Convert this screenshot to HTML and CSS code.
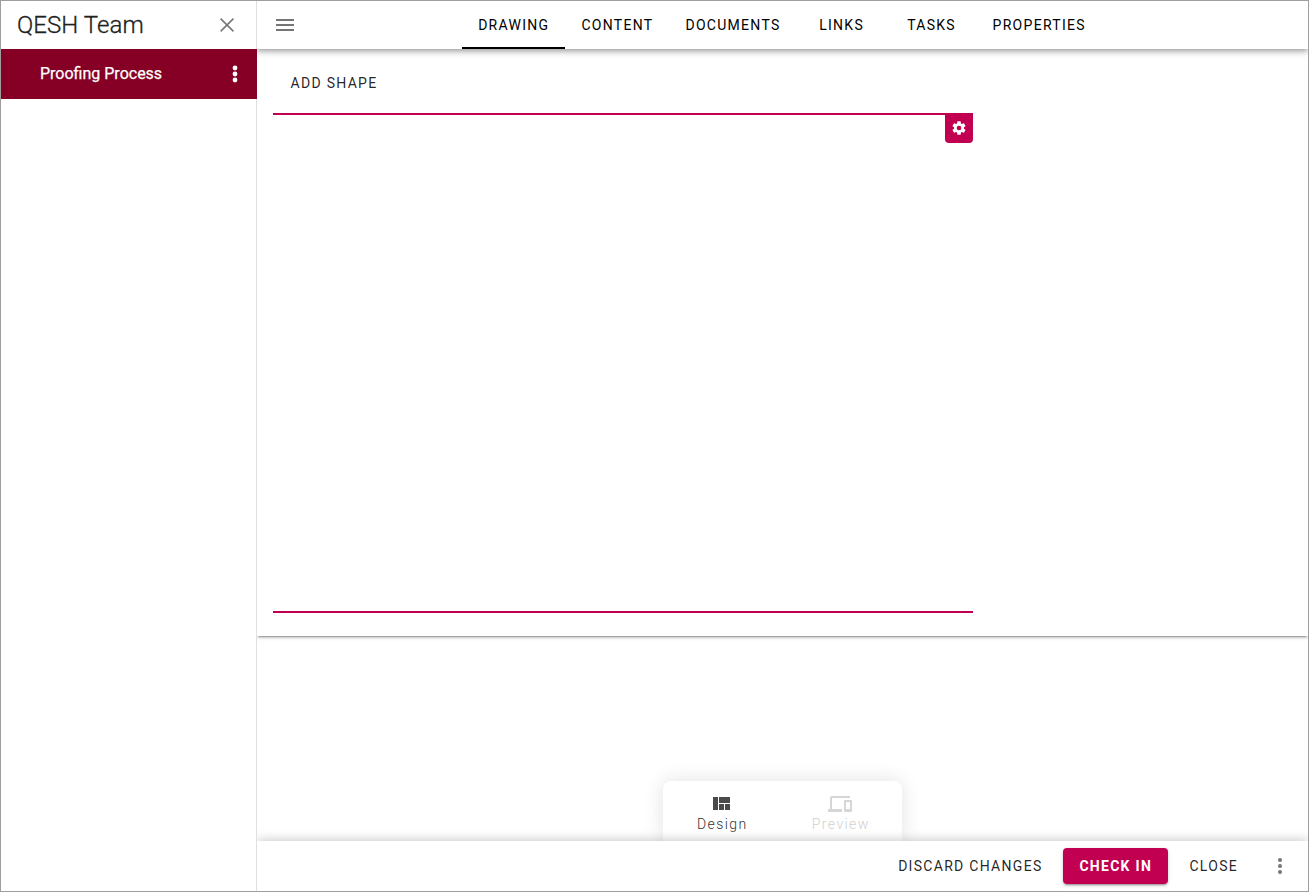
FILE: index.html
```html
<!DOCTYPE html>
<html lang="en">
<head>
<meta charset="utf-8">
<title>QESH Team</title>
<link rel="stylesheet" href="styles.css">
</head>
<body>
<div class="app">
  <aside class="sidebar">
    <div class="sidebar-head">
      <h1 class="title">QESH Team</h1>
      <svg class="icon-close" viewBox="0 0 14 14" width="14" height="14"><path d="M.6.6l12.8 12.8M13.4.6L.6 13.4" stroke="#757575" stroke-width="1.5"/></svg>
    </div>
    <div class="nav-item">
      <span class="nav-label">Proofing Process</span>
      <svg class="dots" viewBox="0 0 6 18" width="6" height="18" fill="#fff"><circle cx="3" cy="3" r="2.4"/><circle cx="3" cy="9" r="2.4"/><circle cx="3" cy="15" r="2.4"/></svg>
    </div>
  </aside>
  <main class="main">
    <header class="topbar">
      <svg class="menu" viewBox="0 0 18 12" width="18" height="12"><path d="M0 1h18M0 6h18M0 11h18" stroke="#757575" stroke-width="2"/></svg>
      <nav class="tabs">
        <a class="tab active">DRAWING</a>
        <a class="tab">CONTENT</a>
        <a class="tab">DOCUMENTS</a>
        <a class="tab">LINKS</a>
        <a class="tab">TASKS</a>
        <a class="tab">PROPERTIES</a>
      </nav>
    </header>
    <section class="panel">
      <button class="text-btn add">ADD SHAPE</button>
      <div class="canvas">
        <button class="gear"><svg viewBox="0 0 24 24" width="16" height="16" fill="#fff"><path d="M12 15.5A3.5 3.5 0 0 1 8.5 12 3.5 3.5 0 0 1 12 8.5a3.5 3.5 0 0 1 3.5 3.5 3.5 3.5 0 0 1-3.5 3.5m7.43-2.53c.04-.32.07-.64.07-.97s-.03-.66-.07-1l2.11-1.63c.19-.15.24-.42.12-.64l-2-3.46c-.12-.22-.39-.31-.61-.22l-2.49 1c-.52-.39-1.06-.73-1.69-.98l-.37-2.65A.506.506 0 0 0 14 2h-4c-.25 0-.46.18-.5.42l-.37 2.65c-.63.25-1.17.59-1.69.98l-2.49-1c-.22-.09-.49 0-.61.22l-2 3.46c-.13.22-.07.49.12.64L4.57 11c-.04.34-.07.67-.07 1s.03.65.07.97l-2.11 1.66c-.19.15-.25.42-.12.64l2 3.46c.12.22.39.3.61.22l2.49-1.01c.52.4 1.06.74 1.69.99l.37 2.65c.04.24.25.42.5.42h4c.25 0 .46-.18.5-.42l.37-2.65c.63-.26 1.17-.59 1.69-.99l2.49 1.01c.22.08.49 0 .61-.22l2-3.46c.12-.22.07-.49-.12-.64z"/></svg></button>
      </div>
    </section>
    <section class="workspace">
      <div class="modes">
        <div class="mode">
          <svg viewBox="0 0 17 13" width="17" height="13" fill="#4a4a4a"><path d="M0 0h5v13H0zM6 0h11v6H6zM6 7h5v6H6zM12 7h5v6h-5z"/></svg>
          <span>Design</span>
        </div>
        <div class="mode disabled">
          <svg viewBox="0 4 24 16" width="24" height="16" fill="#d6d6d6"><path d="M4 6h18V4H4c-1.100 0-2 .9-2 2v11H0v3h14v-3H4V6zm19 2h-6c-.55 0-1 .45-1 1v10c0 .55.45 1 1 1h6c.55 0 1-.45 1-1V9c0-.55-.45-1-1-1zm-1 9h-4v-7h4v7z"/></svg>
          <span>Preview</span>
        </div>
      </div>
    </section>
    <footer class="footer">
      <button class="text-btn">DISCARD CHANGES</button>
      <button class="text-btn primary">CHECK IN</button>
      <button class="text-btn">CLOSE</button>
      <svg class="dots more" viewBox="0 0 6 18" width="6" height="18" fill="#757575"><circle cx="3" cy="3" r="2"/><circle cx="3" cy="9" r="2"/><circle cx="3" cy="15" r="2"/></svg>
    </footer>
  </main>
</div>
</body>
</html>
```

FILE: styles.css
```css
* { box-sizing: border-box; }
body { margin: 0; font-family: Roboto, "Liberation Sans", sans-serif; color: rgba(0,0,0,.87); }
svg { display: block; flex: none; }
button { font: inherit; color: inherit; border: 0; background: none; padding: 0; }
.app { display: flex; width: 1309px; height: 892px; border: 1px solid #9e9e9e; background: #fff; overflow: hidden; }
.sidebar { width: 256px; flex: none; box-shadow: inset -1px 0 #e0e0e0; }
.sidebar-head { height: 48px; display: flex; align-items: center; justify-content: space-between; padding: 0 23px 0 16px; }
.title { margin: 0; font-size: 24px; line-height: 32px; font-weight: 300; letter-spacing: .06px; color: #212121; -webkit-text-stroke: .3px #212121; }
.nav-item { height: 50px; background: #850024; color: #fff; display: flex; align-items: center; justify-content: space-between; padding: 0 19px 0 39px; }
.nav-label { font-size: 16px; line-height: 24px; -webkit-text-stroke: .25px #fff; }
.main { flex: 1; min-width: 0; display: flex; flex-direction: column; overflow: hidden; }
.topbar { height: 48px; flex: none; display: flex; align-items: center; background: #fff; z-index: 2; box-shadow: 0 2px 4px -1px rgba(0,0,0,.2), 0 4px 5px rgba(0,0,0,.14), 0 1px 10px rgba(0,0,0,.12); padding: 0 38px 0 19px; }
.tabs { flex: 1; height: 48px; display: flex; justify-content: center; }
.tab { min-width: 90px; padding: 0 16px; display: flex; align-items: center; justify-content: center; font-size: 14px; letter-spacing: 1.29px; color: #000; }
.active { box-shadow: inset 0 -2px #000; }
.panel { height: 587px; flex: none; padding: 16px; z-index: 1; background: #fff; box-shadow: 0 3px 1px -2px rgba(0,0,0,.2), 0 2px 2px rgba(0,0,0,.14), 0 1px 5px rgba(0,0,0,.12); }
.text-btn { height: 36px; padding: 0 16px; font-size: 14px; letter-spacing: 1.29px; }
.add { display: block; margin-left: 1.5px; }
.canvas { width: 700px; height: 500px; margin-top: 12px; border: solid #c20052; border-width: 2px 0; display: flex; justify-content: flex-end; align-items: flex-start; }
.gear { width: 28px; height: 30px; margin-top: -2px; background: #c20052; border-radius: 0 0 4px 4px; display: flex; align-items: center; justify-content: center; }
.workspace { flex: 1; display: flex; align-items: flex-end; justify-content: center; }
.modes { width: 239px; height: 60px; padding-right: 2px; display: flex; border-radius: 8px 8px 0 0; background: #fff; box-shadow: 0 0 20px rgba(0,0,0,.12); }
.mode { flex: 1; display: flex; flex-direction: column; align-items: center; justify-content: space-between; padding: 16px 0 9px; font-size: 14px; font-weight: 300; line-height: 16px; letter-spacing: 1.4px; color: #333; }
.mode svg { margin-right: 1.5px; }
.disabled { padding-top: 15px; color: #d0d0d0; }
.footer { height: 50px; flex: none; background: #fff; z-index: 1; display: flex; align-items: center; justify-content: flex-end; padding-right: 25px; box-shadow: 0 -1px 10px rgba(0,0,0,.22); }
.primary { background: #c20052; color: #fff; font-weight: 700; border-radius: 4px; padding: 0 16.3px; margin: 0 5px 0 4.6px; box-shadow: 0 3px 1px -2px rgba(0,0,0,.2), 0 2px 2px rgba(0,0,0,.14), 0 1px 5px rgba(0,0,0,.12); }
.more { margin-left: 23px; }
```
